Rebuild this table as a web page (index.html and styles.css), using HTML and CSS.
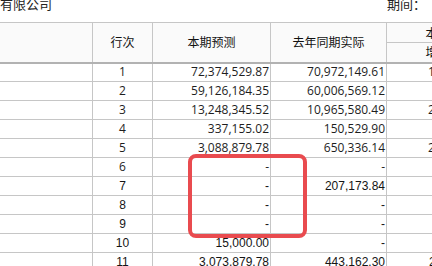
FILE: index.html
```html
<!DOCTYPE html>
<html lang="zh-CN">
<head>
<meta charset="utf-8">
<title>预测报表</title>
<link rel="stylesheet" href="styles.css">
</head>
<body>
<div class="page">
  <div class="topbar">
    <div class="company">有限公司</div>
    <div class="period">期间：<span class="period-value">2024年</span></div>
  </div>
  <table class="report">
    <colgroup>
      <col class="c-name">
      <col class="c-no">
      <col class="c-num">
      <col class="c-num2">
      <col class="c-diff">
      <col class="c-rate">
    </colgroup>
    <thead>
      <tr class="h1">
        <th rowspan="2"></th>
        <th rowspan="2">行次</th>
        <th rowspan="2">本期预测</th>
        <th rowspan="2">去年同期实际</th>
        <th colspan="2">本期预测比去年同期</th>
      </tr>
      <tr class="h2">
        <th>增减额</th>
        <th>增减率</th>
      </tr>
    </thead>
    <tbody>
      <tr class="seg"><td></td><td class="no">1</td><td class="num">72,374,529.87</td><td class="num">70,972,149.61</td><td class="num">1,402,380.26</td><td class="num">1.98%</td></tr>
      <tr class="seg"><td></td><td class="no">2</td><td class="num">59,126,184.35</td><td class="num">60,006,569.12</td><td class="num">-880,384.77</td><td class="num">-1.47%</td></tr>
      <tr class="seg"><td></td><td class="no">3</td><td class="num">13,248,345.52</td><td class="num">10,965,580.49</td><td class="num">2,282,765.03</td><td class="num">20.82%</td></tr>
      <tr class="seg"><td></td><td class="no">4</td><td class="num">337,155.02</td><td class="num">150,529.90</td><td class="num">186,625.12</td><td class="num">123.98%</td></tr>
      <tr class="seg"><td></td><td class="no">5</td><td class="num">3,088,879.78</td><td class="num">650,336.14</td><td class="num">2,438,543.64</td><td class="num">374.97%</td></tr>
      <tr class="seg"><td></td><td class="no">6</td><td class="num">-</td><td class="num">-</td><td class="num">-</td><td class="num">-</td></tr>
      <tr class="ari"><td></td><td class="no">7</td><td class="num">-</td><td class="num">207,173.84</td><td class="num">-207,173.84</td><td class="num">-100.00%</td></tr>
      <tr class="ari"><td></td><td class="no">8</td><td class="num">-</td><td class="num">-</td><td class="num">-</td><td class="num">-</td></tr>
      <tr class="ari"><td></td><td class="no">9</td><td class="num">-</td><td class="num">-</td><td class="num">-</td><td class="num">-</td></tr>
      <tr class="ari"><td></td><td class="no">10</td><td class="num">15,000.00</td><td class="num">-</td><td class="num">15,000.00</td><td class="num">-</td></tr>
      <tr class="ari"><td></td><td class="no">11</td><td class="num">3,073,879.78</td><td class="num">443,162.30</td><td class="num">2,630,717.48</td><td class="num">593.63%</td></tr>
    </tbody>
  </table>
  <div class="mark"></div>
</div>
</body>
</html>
```

FILE: styles.css
```css
html, body {
  margin: 0;
  padding: 0;
  background: #ffffff;
  overflow: hidden;
}

.page {
  position: relative;
  width: 700px;
  font-family: "Open Sans", "Noto Sans CJK SC", sans-serif;
  color: #1e1e1e;
}

.topbar {
  display: flex;
  height: 22px;
  font-family: "Noto Sans CJK SC", sans-serif;
  font-size: 13px;
  line-height: 13px;
  color: #222;
}

.company {
  flex: 0 0 387px;
  margin-top: -3px;
}

.period {
  margin-top: -3px;
  white-space: nowrap;
}

.period-value {
  margin-left: 14px;
}

.report {
  border-collapse: collapse;
  table-layout: fixed;
  margin-left: -20px;
  font-size: 12px;
}

.c-name { width: 112px; }
.c-no { width: 60px; }
.c-num { width: 118px; }
.c-num2 { width: 116px; }
.c-diff { width: 114px; }
.c-rate { width: 72px; }

.report th,
.report td {
  border: 1px solid #c6c6c6;
  padding: 0 1px 0 0;
  white-space: nowrap;
  overflow: hidden;
  vertical-align: middle;
}

.report th {
  font-family: "Noto Sans CJK SC", sans-serif;
  font-weight: normal;
  font-size: 12px;
  color: #111;
  background: #fafafa;
  text-align: center;
  line-height: 14px;
  padding: 0;
}

.report thead tr { height: 20px; }

.report tr.h2 th,
.report tr.h1 th[rowspan] {
  border-bottom: 2px solid #b2b2b2;
}

.report tbody tr { height: 19px; }

.report td {
  line-height: 14px;
}

.report td.no {
  text-align: center;
  padding: 0;
}

.report td.num {
  text-align: right;
}

.report tr.ari td {
  font-family: "Liberation Sans", Arial, sans-serif;
  color: #151515;
}

.mark {
  position: absolute;
  left: 188px;
  top: 154px;
  width: 111px;
  height: 76px;
  border: 4px solid #e94b4f;
  border-radius: 8px;
}
```
